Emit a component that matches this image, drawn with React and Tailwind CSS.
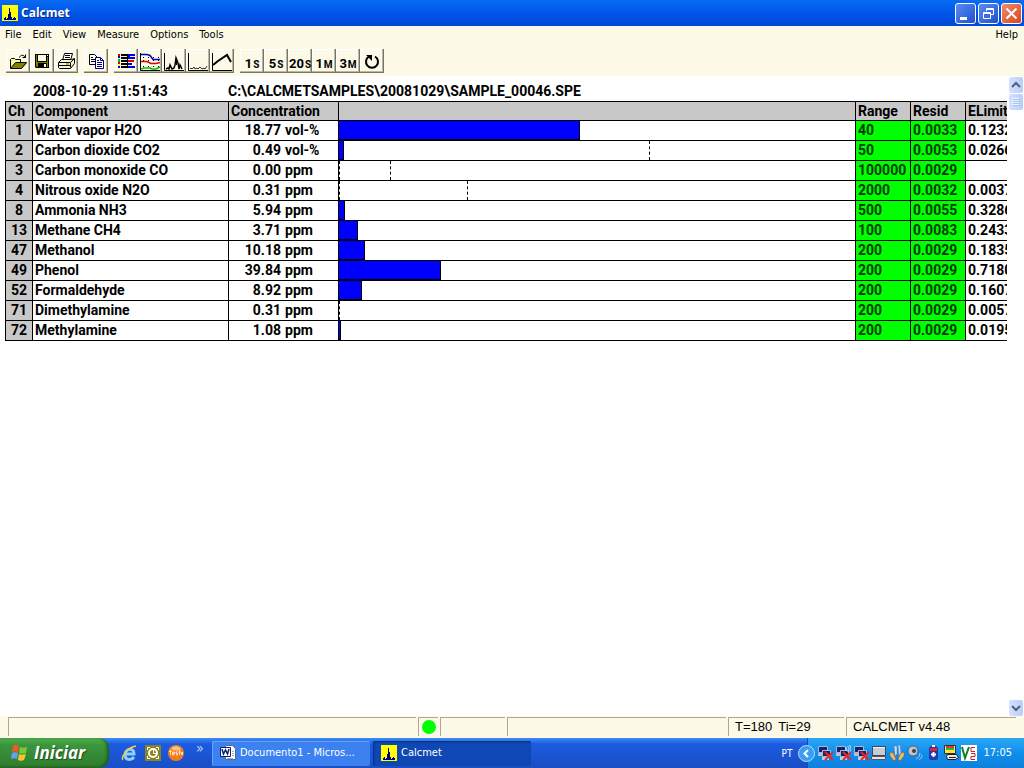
const rows = [
  { ch: 1, name: "Water vapor H2O", value: "18.77", unit: "vol-%", bar: 46.8, range: "40", resid: "0.0033", limit: "0.1232" },
  { ch: 2, name: "Carbon dioxide CO2", value: "0.49", unit: "vol-%", bar: 1, mark: 60, range: "50", resid: "0.0053", limit: "0.0266" },
  { ch: 3, name: "Carbon monoxide CO", value: "0.00", unit: "ppm", bar: 0, mark: 9.8, range: "100000", resid: "0.0029", limit: "" },
  { ch: 4, name: "Nitrous oxide N2O", value: "0.31", unit: "ppm", bar: 0, mark: 24.9, range: "2000", resid: "0.0032", limit: "0.0037" },
  { ch: 8, name: "Ammonia NH3", value: "5.94", unit: "ppm", bar: 1.2, range: "500", resid: "0.0055", limit: "0.3286" },
  { ch: 13, name: "Methane CH4", value: "3.71", unit: "ppm", bar: 3.7, range: "100", resid: "0.0083", limit: "0.2433" },
  { ch: 47, name: "Methanol", value: "10.18", unit: "ppm", bar: 5.1, range: "200", resid: "0.0029", limit: "0.1835" },
  { ch: 49, name: "Phenol", value: "39.84", unit: "ppm", bar: 19.8, range: "200", resid: "0.0029", limit: "0.7180" },
  { ch: 52, name: "Formaldehyde", value: "8.92", unit: "ppm", bar: 4.5, range: "200", resid: "0.0029", limit: "0.1607" },
  { ch: 71, name: "Dimethylamine", value: "0.31", unit: "ppm", bar: 0, range: "200", resid: "0.0029", limit: "0.0057" },
  { ch: 72, name: "Methylamine", value: "1.08", unit: "ppm", bar: 0.4, range: "200", resid: "0.0029", limit: "0.0195" },
];

const menus = ["File", "Edit", "View", "Measure", "Options", "Tools"];

function Icon({ size = 24, className = "", children }) {
  return (
    <svg width={size} height={size} viewBox={`0 0 ${size} ${size}`} className={`shrink-0 ${className}`} fill="none" aria-hidden="true">
      {children}
    </svg>
  );
}

function AppIcon() {
  return (
    <Icon size={16}>
      <path fill="#ffff00" d="M0 0h16v16H0z" />
      <path fill="#000080" d="M2 15v-2h1v-1h1v2h1v-1h1V9h1V3h1v4h1v5h1v2h1v-1h1v-1h1v1h1v2z" />
    </Icon>
  );
}

const icons = {
  Open: (
    <>
      <path fill="#f8f8a0" d="M5 10h4l1 1h5v3H9l-4 5z" />
      <path fill="#808000" d="M9 14h12l-5 5H5z" />
      <path stroke="#000" d="M4.500 19V10.500L5.500 9.500H8.500L9.500 10.500H14.500V13.500M4.500 19.500L9.500 13.500H20.500L15.500 19.500ZM13.500 8.500C14.500 5.500 17.500 5.500 19.500 8.500M19.500 5.500V8.500H16.500" />
    </>
  ),
  Save: (
    <>
      <path fill="#000" d="M5 5h14v14H6l-1-1z" />
      <path fill="#808000" d="M6 6h1v7h10V8h1v10H7l-1-1z" />
      <path fill="#fcfae6" d="M8 6h8v6H8zM17 6h1v1h-1z" />
      <path fill="#000" d="M8 14h9v4H8z" />
      <path fill="#fcfae6" d="M14 15h2v3h-2z" />
    </>
  ),
  Print: (
    <>
      <path fill="#fff" stroke="#000" d="M8.500 11.500l2-7h8l-2 7" />
      <path stroke="#000" d="M11 6.500h5M11 8.500h5" />
      <path fill="#f0eedc" stroke="#000" d="M4.500 13.500l3-3h10l3-1v5l-4 5h-11l-1-1z" />
      <path stroke="#000" d="M5 13.500h11.500v5M17 13l3-3M5 16.500h11" />
      <path fill="#c8b800" d="M12 14h3v2h-3z" />
    </>
  ),
  Copy: (
    <>
      <path fill="#fff" stroke="#000" d="M5.500 5.500h5l3 3v7h-8z" />
      <path stroke="#000" d="M7 8.500h2M7 10.500h5M7 12.500h5" />
      <path fill="#fff" stroke="#000080" d="M11.500 8.500h5l3 3v8h-8z" />
      <path stroke="#000080" d="M16.500 9v2.500h3M13 11.500h2M13 13.500h5M13 15.500h5M13 17.500h5" />
    </>
  ),
  Table: (
    <>
      <path fill="#000" d="M7 5h6v2H7zM7 8h6v2H7zM7 11h6v2H7zM7 14h6v2H7zM7 17h6v2H7zM13 5h1v14h-1z" />
      <path fill="#e00000" d="M4 5h2v2H4zM14 11h6v2h-6zM4 13h2v2H4z" />
      <path fill="#00c000" d="M4 10h2v3H4z" />
      <path fill="#ffff00" d="M4 15h2v2H4z" />
      <path fill="#0000e0" d="M4 7h2v2H4zM4 17h2v2H4zM14 5h7v2h-5v1h5v2h-7zM14 14h4v2h-4zM14 17h7v2h-7z" />
    </>
  ),
  Trends: (
    <>
      <path stroke="#000" d="M2.500 4v17.500H22" />
      <path stroke="#000" strokeDasharray="1 4" d="M5 8.500h17M5 11.500h17M5 17.500h17" />
      <path stroke="#0000c0" strokeWidth="1.500" d="M3 5.500h6l3 1 3 4h7" />
      <path stroke="#e00000" strokeWidth="1.500" d="M3 12.500h6l4 2h5l4-1" />
      <path stroke="#00c000" strokeWidth="1.500" d="M3 20l3-1h6l2 1h4l4-2" />
    </>
  ),
  Spectrum: (
    <>
      <path stroke="#000" d="M2.500 4v17.500H22" />
      <path stroke="#000" strokeWidth="1.500" d="M4 20l2-1 1 1 1-4 2 4 2-1 1-3 1-7 2 5 1 6 1-4 2 4" />
      <path stroke="#000" d="M14.500 10v6" />
    </>
  ),
  Residual: (
    <>
      <path stroke="#000" d="M2.500 4v17.500H22" />
      <path stroke="#000" strokeWidth=".8" d="M4 20l1-1 1 1 2-2 1 2 2-1 1 1 2-2 2 2 2-1 1 1 2-3" />
    </>
  ),
  Calibration: (
    <>
      <path stroke="#000" d="M2.500 4v17.500H22" />
      <path stroke="#000" strokeWidth="2" d="M3 16l5-4 9-6 4 7" />
    </>
  ),
  Continuous: (
    <>
      <path stroke="#000" strokeWidth="2" d="M9 7.500a6 6 0 1 0 6 0" />
      <path fill="#000" d="M6 6h6v6l-2-2-2-2z" />
    </>
  ),
};

const toolGroups = [["Open", "Save", "Print"], ["Copy"], ["Table", "Trends", "Spectrum", "Residual", "Calibration"]];
const times = [
  ["1", "S"],
  ["5", "S"],
  ["20", "S"],
  ["1", "M"],
  ["3", "M"],
];

function ToolButton({ label, children }) {
  return (
    <button
      type="button"
      aria-label={label}
      className="flex h-6 w-6 items-start justify-start overflow-hidden bg-[#fcfae6] shadow-[inset_-1px_-1px_0_#77756a,inset_-2px_-2px_0_#b9b6a4,inset_1px_1px_0_#ffffff]"
    >
      {children}
    </button>
  );
}

function TitleBar() {
  const control = "flex size-[21px] items-center justify-center rounded-[3px] border border-white";
  return (
    <header className="flex h-[26px] shrink-0 items-center justify-between bg-linear-to-b from-[#0a6cf5] via-[#0055e8] to-[#0048d8] pr-0.5 pl-0.5">
      <div className="flex items-center gap-[3px]">
        <AppIcon />
        <h1 className="font-['Open_Sans',sans-serif] text-[12px] font-bold text-white [text-shadow:1px_1px_0_#0a2a80]">Calcmet</h1>
      </div>
      <div className="flex gap-0.5">
        <button type="button" aria-label="Minimize" className={`${control} bg-linear-to-br from-[#5c8bf2] to-[#1f4fd0]`}>
          <Icon size={19}>
            <path fill="#fff" d="M4 13h7v3H4z" />
          </Icon>
        </button>
        <button type="button" aria-label="Restore" className={`${control} bg-linear-to-br from-[#5c8bf2] to-[#1f4fd0]`}>
          <Icon size={19}>
            <path stroke="#fff" d="M7.500 7V4.500h7v6H12M7 5.500h8M4.500 8.500h7v6h-7zM4 9.500h8" />
          </Icon>
        </button>
        <button type="button" aria-label="Close" className={`${control} bg-linear-to-br from-[#f08c6c] to-[#d8401a]`}>
          <Icon size={19}>
            <path stroke="#fff" strokeWidth="2" d="M4.500 4.500l10 10M14.500 4.500l-10 10" />
          </Icon>
        </button>
      </div>
    </header>
  );
}

function MenuBar() {
  return (
    <nav className="flex h-[18px] shrink-0 items-center gap-[11px] bg-[#fcfae6] pt-px pr-1.5 pl-[5px] font-['DejaVu_Sans_Condensed','DejaVu_Sans',sans-serif] text-[11px] text-black">
      {menus.map((menu) => (
        <button type="button" key={menu}>{menu}</button>
      ))}
      <button type="button" className="ml-auto">Help</button>
    </nav>
  );
}

function Toolbar() {
  return (
    <div role="toolbar" className="flex h-8 shrink-0 items-center gap-1.5 bg-[#fcfae6] pt-0.5 pl-1.5">
      {toolGroups.map((group) => (
        <div key={group[0]} className="flex">
          {group.map((name) => (
            <ToolButton key={name} label={name}>
              <Icon>{icons[name]}</Icon>
            </ToolButton>
          ))}
        </div>
      ))}
      <div className="flex">
        {times.map(([count, unit]) => (
          <ToolButton key={count + unit} label={`${count} ${unit}`}>
            <span className="flex w-full items-baseline justify-center gap-px pt-[7px] font-['Roboto',sans-serif] text-[13px] leading-4 font-bold text-black">
              {count}
              <span className="text-[10px]">{unit}</span>
            </span>
          </ToolButton>
        ))}
        <ToolButton label="Continuous">
          <Icon>{icons.Continuous}</Icon>
        </ToolButton>
      </div>
    </div>
  );
}

function Bar({ row }) {
  return (
    <div className="relative h-[19px]">
      {row.bar > 0 ? (
        <div className="h-full border-r border-b border-black bg-[#0000ff]" style={{ width: `${row.bar}%` }} />
      ) : (
        <div className="h-full border-l border-dashed border-black" />
      )}
      {row.mark && (
        <div className="absolute inset-y-0 border-l border-dashed border-black" style={{ left: `${row.mark}%` }} />
      )}
    </div>
  );
}

function ResultTable() {
  const cell = "border-b border-l border-black p-0 pl-0.5";
  const head = `${cell} h-[19px] bg-[#c8c8c8] text-left leading-[18px] font-bold`;
  const green = `${cell} bg-[#00ff00] text-[#003c00]`;
  return (
    <table className="w-full table-fixed border-separate border-spacing-0 border-t border-black leading-[19px] whitespace-nowrap">
      <colgroup>
        <col className="w-[27px]" />
        <col className="w-[196px]" />
        <col className="w-[110px]" />
        <col />
        <col className="w-[55px]" />
        <col className="w-[55px]" />
        <col className="w-[42px]" />
      </colgroup>
      <thead>
        <tr>
          <th className={head}>Ch</th>
          <th className={head}>Component</th>
          <th className={head}>Concentration</th>
          <th className={head} aria-label="Level" />
          <th className={head}>Range</th>
          <th className={head}>Resid</th>
          <th className={head}>ELimit</th>
        </tr>
      </thead>
      <tbody>
        {rows.map((row) => (
          <tr key={row.ch}>
            <td className="border-b border-l border-black bg-[#c8c8c8] p-0 text-center">{row.ch}</td>
            <td className={cell}>{row.name}</td>
            <td className={cell}>
              <div className="flex gap-1">
                <span className="w-[50px] text-right">{row.value}</span>
                <span>{row.unit}</span>
              </div>
            </td>
            <td className="border-b border-l border-black p-0">
              <Bar row={row} />
            </td>
            <td className={green}>{row.range}</td>
            <td className={green}>{row.resid}</td>
            <td className={cell}>{row.limit}</td>
          </tr>
        ))}
      </tbody>
    </table>
  );
}

function ScrollBar() {
  const part = "flex h-4 w-[14px] items-center justify-center rounded-[2px] bg-linear-to-r from-[#d6e2fd] to-[#b9cdf9]";
  return (
    <div className="flex w-[17px] shrink-0 flex-col items-center gap-px bg-white pt-px">
      <button type="button" aria-label="Scroll up" className={part}>
        <Icon size={10}>
          <path stroke="#4d6185" strokeWidth="2" d="M1 7l4-4 4 4" />
        </Icon>
      </button>
      <div className={part}>
        <Icon size={10}>
          <path stroke="#eef4fe" d="M1 1.500h7M1 3.500h7M1 5.500h7M1 7.500h7" />
          <path stroke="#a4c0f8" d="M2 2.500h7M2 4.500h7M2 6.500h7M2 8.500h7" />
        </Icon>
      </div>
      <button type="button" aria-label="Scroll down" className={`${part} mt-auto`}>
        <Icon size={10}>
          <path stroke="#4d6185" strokeWidth="2" d="M1 3l4 4 4-4" />
        </Icon>
      </button>
    </div>
  );
}

function StatusBar() {
  const panel = "flex h-[19px] items-center border-t border-l border-[#aca899]";
  return (
    <footer className="flex h-[22px] shrink-0 gap-0.5 bg-[#fcfae6] pt-px pr-2 pl-2 font-['Liberation_Sans',sans-serif] text-[13px] text-black">
      <div className={`${panel} flex-[409]`} />
      <div className={`${panel} w-5 justify-center`}>
        <span className="size-[14px] rounded-full bg-[#00ff00]" />
      </div>
      <div className={`${panel} flex-[64]`} />
      <div className={`${panel} flex-[219]`} />
      <div className={`${panel} w-[116px] gap-1.5 pl-1.5`}>
        <span>T=180</span>
        <span>Ti=29</span>
      </div>
      <div className={`${panel} w-[170px] pl-1.5`}>CALCMET v4.48</div>
    </footer>
  );
}

function Monitor() {
  return (
    <>
      <path fill="#14246c" stroke="#a8b8d8" d="M1.500 1.500h9v6h-9z" />
      <path fill="#b8c0d0" d="M1 8h5v3H1z" />
      <path fill="#14246c" stroke="#a8b8d8" d="M5.500 5.500h8v6h-8z" />
      <path fill="#c8ccd8" d="M5 12h7v3H5z" />
    </>
  );
}

function Offline() {
  return <path stroke="#e82820" strokeWidth="2" d="M8 7l8 8M16 7l-8 8" />;
}

function Tray() {
  return (
    <div className="flex h-full items-center gap-0.5 border-l border-[#0a4cc0] bg-linear-to-b from-[#2aa8f4] via-[#0f8eec] to-[#0f80dc] pr-3 pl-[9px]">
      <Icon size={16}>
        <Monitor />
        <Offline />
      </Icon>
      <Icon size={16}>
        <Monitor />
        <path stroke="#d8ecfc" d="M10.500 2c1 1 1 3 0 4M12.500 1c2 2 2 4 0 6M14.500 0c2 3 2 5 0 8" />
        <Offline />
      </Icon>
      <Icon size={16}>
        <Monitor />
        <Offline />
      </Icon>
      <Icon size={16}>
        <path fill="#c8ccd0" stroke="#384468" d="M1.500 1.500h13v9h-13z" />
        <path stroke="#f4f4f4" d="M2 2.500h12" />
        <path fill="#e8e4d8" stroke="#50586c" d="M.500 11.500h14v3H.500z" />
      </Icon>
      <Icon size={16}>
        <path fill="#c8dcf4" stroke="#5c7ca8" strokeWidth=".5" d="M5 1h3v8l-2 2zM9 0h2l1 8-2 3z" />
        <path fill="#f4b860" stroke="#80582c" strokeWidth=".5" d="M1 7l3 1 3 6-2 2-4-5zM15 7l-3 1-3 6 2 2 4-5z" />
      </Icon>
      <Icon size={16}>
        <circle cx="6" cy="6" r="5" fill="#c0c4cc" stroke="#586070" />
        <circle cx="7" cy="6" r="2" fill="#384050" />
        <path stroke="#a8ccf4" d="M9 14c2-1 4-3 4-6M12 15c2-1 3-3 3-5" />
      </Icon>
      <Icon size={16}>
        <path fill="#2038b0" d="M4 3l2-2h5l2 2v11l-2 1H6l-2-1z" />
        <path fill="#f4f4fc" d="M7 0h3v2H7z" />
        <path fill="#e82020" d="M5 3h7v3H5z" />
        <path stroke="#fff" strokeWidth="2" d="M6 9.500h5M8.500 7v5" />
      </Icon>
      <Icon size={16}>
        <path fill="#e8e4d0" stroke="#303030" d="M1.500.500h11v8h-11z" />
        <path fill="#f03030" d="M3 1h8v2H3z" />
        <path fill="#20c030" d="M3 3h8v2H3z" />
        <path fill="#ffe820" d="M3 5h8v3H3z" />
        <path fill="#e8e8e8" stroke="#202020" d="M4.500 9.500h9l2 3-3 2h-8l-1-3z" />
        <path stroke="#202020" d="M6 12.500h7" />
      </Icon>
      <Icon size={16}>
        <path fill="#fff" d="M0 0h16v16H0z" />
        <path stroke="#108020" strokeWidth="2" d="M1 2l3 11L8 2" />
        <path stroke="#d02020" d="M14 2.500h-4v4h4" />
        <path stroke="#d02020" d="M10 8.500h4v3h-4v3h4" />
      </Icon>
      <time className="ml-1 text-[11px] text-white">17:05</time>
    </div>
  );
}

function Taskbar() {
  const task = "flex h-[25px] w-[158px] items-center gap-1 rounded-[2px] text-[11px] text-white";
  return (
    <div className="flex h-[30px] shrink-0 items-center bg-linear-to-b from-[#3d8cf5] from-0% via-[#1c5be0] via-20% to-[#1a4fc4] font-['DejaVu_Sans_Condensed','DejaVu_Sans',sans-serif]">
      <button
        type="button"
        className="flex h-full w-[109px] items-center gap-1.5 rounded-r-[10px] bg-linear-to-b from-[#4fae4f] from-0% via-[#3a953a] via-25% to-[#2f7d2f] pl-2.5 shadow-[inset_-2px_-1px_3px_#1c5c1c]"
      >
        <Icon size={18}>
          <path fill="#f05a28" d="M3 2c2-2 4-1 6 0L8 8C6 7 4 7 2 8z" />
          <path fill="#7cc83c" d="M10 3c2 1 4 1 7 0l-1 6c-2 1-5 1-7 0z" />
          <path fill="#6c9cf8" d="M2 9c2-1 4-1 6 0l-1 6c-2-1-4-1-6 0z" />
          <path fill="#fcc828" d="M9 10c2 1 4 1 7 0l-2 6c-2 1-4 1-6 0z" />
        </Icon>
        <span className="font-['Open_Sans',sans-serif] text-[17px] font-bold text-white italic [text-shadow:1px_1px_1px_#1c4c1c]">Iniciar</span>
      </button>
      <div className="flex items-center gap-[7px] pl-3">
        <Icon size={17}>
          <path stroke="#8cd0fc" strokeWidth="3" d="M5 9h8c0-7-9-6-9 1 0 5 6 6 9 2" />
          <path stroke="#fcc840" strokeWidth="1.500" d="M2 15c-3-2 5-13 13-14" />
        </Icon>
        <Icon size={16}>
          <path fill="#8c8420" d="M0 0h16v16H0z" />
          <path stroke="#fff" d="M2.500 5V2.500H5M11 2.500h2.500V5M2.500 11v2.500H5M11 13.500h2.500V11" />
          <circle cx="8" cy="8" r="4" stroke="#fff" strokeWidth="2" />
          <path stroke="#fff" d="M8.500 5v3.500H11" />
        </Icon>
        <Icon size={16}>
          <circle cx="8" cy="8" r="8" fill="#f47c18" />
          <path fill="#fcc080" d="M3 4c3-4 8-3 10 0-3 2-7 2-10 0z" />
          <path stroke="#fff" strokeWidth=".8" d="M1 6.500h2.500M2.500 5v5M4.500 8.500h2v-1.500h-2v3h2M9.500 7H8v1.500h1.500V10H8M11.500 5v5M10.500 7H13M13.500 7.500h1v2h-1z" />
        </Icon>
      </div>
      <span className="mb-2.5 ml-3 w-4 text-[14px] leading-4 text-[#b8d4fc]">»</span>
      <div className="flex gap-[3px]">
        <button type="button" className={`${task} bg-[#3c81f0] pl-2 shadow-[inset_1px_1px_1px_#6ba4fa]`}>
          <Icon size={16}>
            <path fill="#fff" stroke="#586890" d="M5.500.500h7l3 3v11h-10z" />
            <path stroke="#98a8c8" d="M12 6.500h2M12 8.500h2M12 10.500h2M7 13.500h6" />
            <path fill="#fff" stroke="#102070" d="M.500 2.500h10v9H.500z" />
            <path stroke="#102070" strokeWidth="1.500" d="M2 4l1.500 5 2-4 2 4L9 4" />
          </Icon>
          <span className="truncate">Documento1 - Micros...</span>
        </button>
        <button type="button" className={`${task} bg-[#0f48b4] pl-2 shadow-[inset_1px_1px_2px_#08307c]`}>
          <AppIcon />
          <span>Calcmet</span>
        </button>
      </div>
      <span className="ml-auto text-[10px] text-white">PT</span>
      <button type="button" aria-label="Show hidden icons" className="z-10 -mr-2 ml-1.5">
        <Icon size={17}>
          <circle cx="8.500" cy="8.500" r="8" fill="#3c9cf4" stroke="#b8dcfc" />
          <path stroke="#fff" strokeWidth="2" d="M10 5L6.500 8.500 10 12" />
        </Icon>
      </button>
      <Tray />
    </div>
  );
}

export default function App() {
  return (
    <div className="flex h-screen flex-col overflow-hidden bg-white">
      <TitleBar />
      <MenuBar />
      <Toolbar />
      <main className="flex min-h-0 flex-1">
        <section className="min-w-0 flex-1 overflow-hidden pl-[5px] font-['Roboto',sans-serif] text-[14px] font-bold text-black">
          <div className="flex h-[25px] items-center pt-1.5 pl-7">
            <span className="w-[195px]">2008-10-29 11:51:43</span>
            <span>C:\CALCMETSAMPLES\20081029\SAMPLE_00046.SPE</span>
          </div>
          <ResultTable />
        </section>
        <ScrollBar />
      </main>
      <StatusBar />
      <Taskbar />
    </div>
  );
}
